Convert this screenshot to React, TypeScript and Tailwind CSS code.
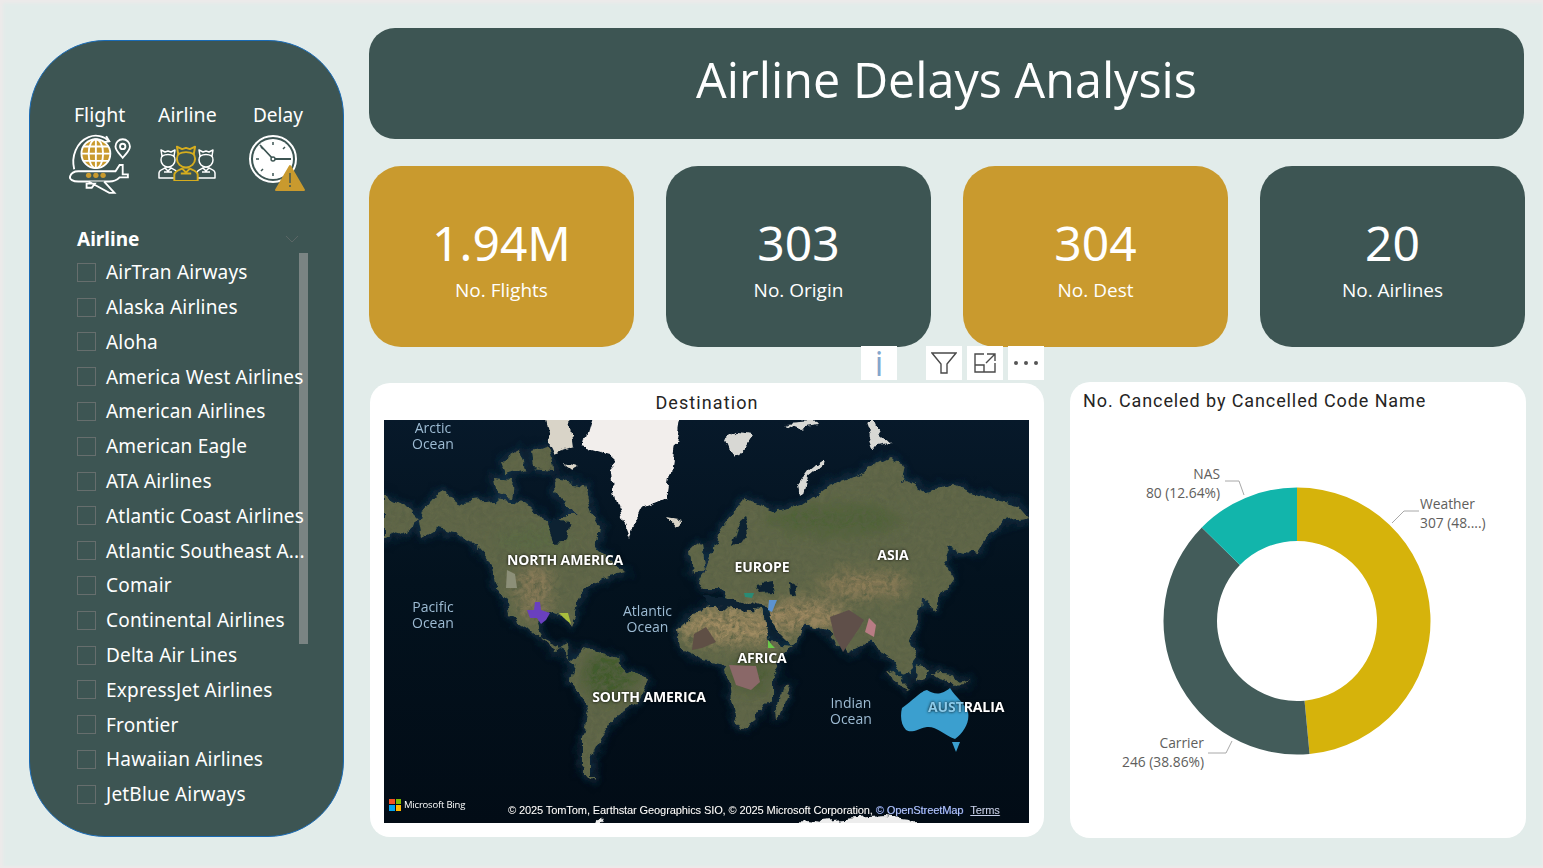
import React from "react";

const comic = "font-['Comic_Sans_MS','Noto_Sans',sans-serif]";
const segoe = "font-['Open_Sans',sans-serif]";
const din = "font-['Roboto',sans-serif]";

const airlines = [
  "AirTran Airways",
  "Alaska Airlines",
  "Aloha",
  "America West Airlines",
  "American Airlines",
  "American Eagle",
  "ATA Airlines",
  "Atlantic Coast Airlines",
  "Atlantic Southeast A...",
  "Comair",
  "Continental Airlines",
  "Delta Air Lines",
  "ExpressJet Airlines",
  "Frontier",
  "Hawaiian Airlines",
  "JetBlue Airways",
];

const kpis = [
  { value: "1.94M", label: "No. Flights", gold: true },
  { value: "303", label: "No. Origin", gold: false },
  { value: "304", label: "No. Dest", gold: true },
  { value: "20", label: "No. Airlines", gold: false },
];

const FlightIcon = () => (
  <svg width="64" height="64" viewBox="0 0 62 62" fill="none" stroke="#fff" strokeWidth="1.8">
    <path d="M6 36C3 24 8 10 20 5c7-3 15-1 20 4" />
    <path d="M37 4l3 5-6 1" />
    <circle cx="27" cy="21" r="14" fill="#C99A2E" />
    <path d="M13 21h28M15 14h24M15 28h24M27 7v28" />
    <ellipse cx="27" cy="21" rx="7" ry="14" />
    <path d="M53 25c-3-4-7-7-7-11a7 7 0 0 1 14 0c0 4-4 7-7 11z" />
    <circle cx="53" cy="14" r="2.6" />
    <path d="M2 43c1-3 4-5 8-5h36l4-6h3v9h5v3h-8c-3 3-6 4-10 4H10c-5 0-9-2-8-5z" fill="#3D5553" />
    <path d="M20 48l20 11h5l-10-11M18 50h8l-3 4h-5z" fill="#3D5553" />
    <circle cx="20" cy="42" r="2.6" fill="#C99A2E" stroke="none" />
    <circle cx="27" cy="42" r="2.6" fill="#C99A2E" stroke="none" />
    <circle cx="34" cy="42" r="2.6" fill="#C99A2E" stroke="none" />
  </svg>
);

const Crew = ({ color }: { color: string }) => (
  <g stroke={color} strokeWidth="1.5" fill="#3D5553" strokeLinejoin="round">
    <path d="M1 31v-5c0-3 4-4 6-5h6c2 1 6 2 6 5v5z" />
    <path d="M6 25h8M7 21l3 3 3-3" />
    <circle cx="10" cy="13" r="7" />
    <path d="M4 9L3 3l4 2 3-1 3 1 4-2-1 6c-4-2-8-2-12 0z" />
  </g>
);

const CrewIcon = () => (
  <svg width="58" height="38" viewBox="0 0 58 38" fill="none">
    <g transform="translate(0 4)">
      <Crew color="#fff" />
    </g>
    <g transform="translate(38 4)">
      <Crew color="#fff" />
    </g>
    <g transform="translate(15 0) scale(1.3 1.22)">
      <Crew color="#D6AD1E" />
    </g>
  </svg>
);

const DelayIcon = () => (
  <svg width="60" height="58" viewBox="0 0 60 58" fill="none">
    <circle cx="25" cy="24" r="23" stroke="#fff" strokeWidth="2" />
    <circle cx="25" cy="24" r="20" fill="#fff" />
    <g stroke="#3D5553" strokeWidth="1.5">
      <path d="M25 7v3M25 38v3M8 24h3M39 24h3M13 12l2 2M37 12l-2 2M13 36l2-2" />
      <path d="M25 24L12 10M25 24h18" strokeWidth="1.8" />
    </g>
    <circle cx="25" cy="24" r="2" fill="#fff" stroke="#3D5553" strokeWidth="1.4" />
    <path d="M42 31l14 24H28z" fill="#C99A2E" stroke="#C99A2E" strokeWidth="2" strokeLinejoin="round" />
    <path d="M42 38v10" stroke="#3D5553" strokeWidth="1.4" />
    <circle cx="42" cy="51" r="1" fill="#3D5553" />
  </svg>
);

const land = [
  "M39 92L54 73 79 83 109 80 136 83 156 92 163 108 183 95 209 95 216 108 213 128 229 142 243 152 216 158 199 172 191 192 186 203 178 195 163 192 153 205 158 222 172 232 184 226 185 238 196 240 190 245 181 232 160 222 143 206 125 195 123 182 111 162 109 142 96 128 76 115 53 110 39 118 36 102Z",
  "M198 228L223 233 244 250 263 260 253 283 232 297 219 317 209 337 209 360 198 347 198 317 206 287 185 260 190 243Z",
  "M307 190L340 186 377 190 383 217 395 227 410 228 400 233 387 260 387 277 371 300 358 310 350 297 345 263 341 243 320 240 299 230 295 213Z",
  "M316 168L333 118 360 78 394 92 418 85 445 65 465 58 505 38 519 45 516 58 543 72 570 65 604 78 634 85 645 98 620 102 607 112 593 135 566 128 560 142 570 158 549 188 536 178 533 202 526 220 533 237 518 257 511 240 493 230 488 220 463 233 442 210 421 203 417 213 408 227 395 215 384 188 346 182 336 168Z",
  "M0 75L20 85 35 100 18 112 0 120Z",
  "M109 58L130 60 128 78 112 75ZM118 40L135 30 140 50 124 55ZM148 30L165 25 170 50 150 48ZM170 60L200 65 212 105 195 95 175 80ZM306 130L318 125 322 150 308 155Z",
  "M400 287L406 270 403 262 393 285 394 300Z",
  "M547 253L570 255 583 263 565 264ZM505 250L520 262 527 270 510 262ZM532 245L545 248 540 260 530 256Z",
];

const MapPanel = () => (
  <svg viewBox="0 0 645 403" width="645" height="403" className="block" aria-hidden="true">
    <defs>
      <filter id="coast" filterUnits="userSpaceOnUse" x="0" y="0" width="645" height="403">
        <feTurbulence type="fractalNoise" baseFrequency="0.06" numOctaves="4" seed="7" result="t" />
        <feDisplacementMap in="SourceGraphic" in2="t" scale="13" xChannelSelector="R" yChannelSelector="G" />
      </filter>
      <filter id="terrain" filterUnits="userSpaceOnUse" x="0" y="0" width="645" height="403">
        <feTurbulence type="fractalNoise" baseFrequency="0.2" numOctaves="3" seed="4" />
        <feColorMatrix values="0 0 0 0 0.1  0 0 0 0 0.12  0 0 0 0 0.06  1.2 1.2 0 0 -0.85" />
        <feComposite in2="SourceAlpha" operator="in" result="n" />
        <feMerge>
          <feMergeNode in="SourceGraphic" />
          <feMergeNode in="n" />
        </feMerge>
      </filter>
      <filter id="glow">
        <feGaussianBlur stdDeviation="4" />
      </filter>
      <filter id="soft">
        <feGaussianBlur stdDeviation="0.6" />
      </filter>
      <filter id="sand">
        <feGaussianBlur stdDeviation="7" />
      </filter>
      <linearGradient id="ocean" x1="0" y1="0" x2="0" y2="1">
        <stop offset="0" stopColor="#07192A" />
        <stop offset="0.4" stopColor="#03121E" />
        <stop offset="1" stopColor="#020C16" />
      </linearGradient>
      <clipPath id="lands">
        {land.map((d) => (
          <path key={d} d={d} />
        ))}
      </clipPath>
    </defs>
    <rect width="645" height="403" fill="url(#ocean)" />
    <g filter="url(#coast)">
      <g filter="url(#glow)" fill="#123246" stroke="#123246" strokeWidth="4">
        {land.map((d) => (
          <path key={d} d={d} />
        ))}
      </g>
      <g filter="url(#terrain)">
        <g filter="url(#soft)" fill="#62684A">
          {land.map((d) => (
            <path key={d} d={d} />
          ))}
        </g>
        <g clipPath="url(#lands)" filter="url(#sand)">
          <ellipse cx="350" cy="205" rx="58" ry="20" fill="#A28D63" />
          <ellipse cx="420" cy="195" rx="45" ry="16" fill="#9C8760" />
          <ellipse cx="480" cy="165" rx="45" ry="14" fill="#8D7D58" />
          <ellipse cx="555" cy="285" rx="28" ry="16" fill="#A88A5F" />
          <ellipse cx="150" cy="170" rx="18" ry="26" fill="#8C7D5A" />
          <ellipse cx="225" cy="255" rx="26" ry="22" fill="#3F5A2C" />
          <ellipse cx="365" cy="255" rx="22" ry="16" fill="#4A5C30" />
          <ellipse cx="450" cy="100" rx="70" ry="16" fill="#4F6238" />
          <ellipse cx="150" cy="120" rx="40" ry="14" fill="#5B6A45" />
        </g>
      </g>
      {/* inland seas */}
      <g fill="#0A2233" filter="url(#soft)">
        <path d="M163 108L172 95 186 103 183 120 170 122Z" />
        <path d="M316 176L350 178 384 190 350 188 325 186Z" />
        <path d="M372 165L390 162 392 171 376 172Z" />
        <path d="M405 163L412 165 414 178 406 176Z" />
        <path d="M354 105L362 98 366 108 356 122 348 128Z" />
        <path d="M385 190L394 214 402 224 393 218Z" />
      </g>
      <path d="M209 -8L296 -8 289 38 283 78 259 88 246 118 238 98 229 62 226 35 199 27Z" fill="#F2EEEC" filter="url(#soft)" />
      <path d="M160 -8L185 -8 190 28 172 34 165 20ZM180 42L194 46 186 52ZM282 97L298 100 290 106Z" fill="#D9D4C8" filter="url(#soft)" />
      <path d="M341 20L352 12 370 14 362 24 352 38 345 30ZM400 3L430 1 434 6 415 9ZM482 5L490 1 497 18 505 25 490 28ZM441 37L425 50 414 65 416 75 420 72 424 58 440 44Z" fill="#D8D8D4" filter="url(#soft)" />
      <path d="M212 408L216 396 220 408ZM410 408L420 399 440 401 470 398 500 396 525 399 535 408Z" fill="#EDEDED" />
    </g>
    {/* highlighted regions */}
    <g filter="url(#soft)">
      <path d="M518 288C530 280 535 272 543 270C550 274 556 276 566 268C572 278 580 282 584 292C586 302 580 312 571 319C560 315 552 306 543 307C535 308 528 314 522 310C517 305 516 296 518 288Z" fill="#3A9FCF" />
      <path d="M568 322L576 322 572 332Z" fill="#3A9FCF" />
      <path d="M143 190L150 190 151 182 156 182 157 190 166 193 162 200 157 204 153 198 146 198Z" fill="#6A3FBF" />
      <path d="M175 193L184 193 187 204 182 200Z" fill="#A9BE3E" />
      <path d="M123 150L131 154 133 168 122 168Z" fill="#8C8F78" />
      <path d="M345 245L372 246 376 262 367 270 352 265Z" fill="#8A6767" />
      <path d="M310 214L322 207 332 222 318 228 308 230Z" fill="#5E4F45" />
      <path d="M446 197L465 190 480 200 474 210 459 232 450 215Z" fill="#5E4F4A" />
      <path d="M485 198L492 205 490 217 481 212Z" fill="#B87C84" />
      <path d="M360 173L370 173 368 178 361 177Z" fill="#2B8B74" />
      <path d="M385 180L393 180 388 192 384 190Z" fill="#5B93D2" />
      <path d="M384 220L388 225 391 228 384 228Z" fill="#6BCB4A" />
    </g>
  </svg>
);

const mapLabels = [
  { text: "NORTH AMERICA", x: 181, y: 132 },
  { text: "EUROPE", x: 378, y: 139 },
  { text: "ASIA", x: 509, y: 127 },
  { text: "AFRICA", x: 378, y: 230 },
  { text: "SOUTH AMERICA", x: 265, y: 269 },
];

const oceanLabels = [
  { text: ["Arctic", "Ocean"], x: 28, y: 0 },
  { text: ["Pacific", "Ocean"], x: 28, y: 179 },
  { text: ["Atlantic", "Ocean"], x: 239, y: 183 },
  { text: ["Indian", "Ocean"], x: 446, y: 275 },
];

const polar = (r: number, deg: number) => {
  const a = ((deg - 90) * Math.PI) / 180;
  return [134 + r * Math.cos(a), 134 + r * Math.sin(a)];
};

const arc = (from: number, to: number) => {
  const [x1, y1] = polar(133.5, from);
  const [x2, y2] = polar(133.5, to);
  const [x3, y3] = polar(80, to);
  const [x4, y4] = polar(80, from);
  const big = to - from > 180 ? 1 : 0;
  return `M${x1} ${y1}A133.5 133.5 0 ${big} 1 ${x2} ${y2}L${x3} ${y3}A80 80 0 ${big} 0 ${x4} ${y4}Z`;
};

const Donut = () => (
  <svg width="268" height="268" viewBox="0 0 268 268">
    <path d={arc(0, 174.6)} fill="#D6B30B" />
    <path d={arc(174.6, 314.5)} fill="#435C5A" />
    <path d={arc(314.5, 360)} fill="#12B5AB" />
  </svg>
);

const Callout = ({ d }: { d: string }) => (
  <svg width="30" height="24" viewBox="0 0 30 24" fill="none" stroke="#A8A8A8">
    <path d={d} />
  </svg>
);

export default function App() {
  return (
    <div className="relative flex h-[868px] w-[1543px] items-start gap-[25px] overflow-hidden bg-[#E2ECEA] pl-[29px] pr-[18px] pt-[28px] shadow-[inset_3px_3px_3px_#EDEAEA,inset_-1px_-2px_2px_#EDEAEA]">
      {/* slicer panel */}
      <aside className={`mt-[12px] h-[797px] w-[315px] shrink-0 overflow-hidden rounded-[76px] border-[1.5px] border-[#1A6BB5] bg-[#3D5553] pl-[46px] pt-[61px] text-white ${comic}`}>
        <div className="flex w-[240px] items-start">
          <div className="flex w-[84px] flex-col items-start">
            <span className="ml-[-2px] text-[19.5px] leading-[26px]">Flight</span>
            <div className="ml-[-8px] mt-[4px]">
              <FlightIcon />
            </div>
          </div>
          <div className="flex w-[95px] flex-col items-start">
            <span className="ml-[-2px] text-[19.5px] leading-[26px]">Airline</span>
            <div className="ml-[-2px] mt-[3px] pt-[12px]">
              <CrewIcon />
            </div>
          </div>
          <div className="flex flex-col items-start">
            <span className="ml-[-2px] text-[19px] leading-[26px]">Delay</span>
            <div className="ml-[-7px] mt-[7px]">
              <DelayIcon />
            </div>
          </div>
        </div>
        <div className="relative ml-[1px] mt-[30px] w-[232px]">
          <div className="flex h-[26px] items-center justify-between pr-[10px]">
            <span className="text-[19px] font-bold">Airline</span>
            <svg width="14" height="8" viewBox="0 0 14 8" fill="none" stroke="#5A6665">
              <path d="M1 1l6 6 6-6" />
            </svg>
          </div>
          <div className="absolute left-[222px] top-[27px] h-[391px] w-[9px] bg-[#7A8483]" />
          <ul className="relative mt-[3px] w-[232px] overflow-hidden">
            {airlines.map((name) => (
              <li key={name} className="flex h-[34.8px] items-center gap-[10px] whitespace-nowrap">
                <span className="h-[19px] w-[19px] shrink-0 border-[1.5px] border-[#666E6D]" />
                <span className="text-[19px] tracking-[0.2px]">{name}</span>
              </li>
            ))}
          </ul>
        </div>
      </aside>

      <main className="flex w-[1156px] shrink-0 flex-col">
        <header className={`mr-[1px] flex h-[111px] items-center justify-center rounded-[26px] bg-[#3D5553] pb-[8px] text-[48.5px] text-white ${segoe}`}>
          Airline Delays Analysis
        </header>

        <section className="mt-[27px] flex gap-[32px]">
          {kpis.map((kpi) => (
            <div
              key={kpi.label}
              className={`flex h-[181px] w-[265px] flex-col items-center justify-center rounded-[32px] pt-[5px] text-white ${kpi.gold ? "bg-[#C99A2E]" : "bg-[#3D5553]"}`}
            >
              <span className={`text-[48px] leading-[60px] ${comic}`}>{kpi.value}</span>
              <span className={`mt-[2px] text-[19px] leading-[30px] ${segoe}`}>{kpi.label}</span>
            </div>
          ))}
        </section>

        <section className="mt-[36px] flex items-start gap-[26px] pl-[1px]">
          <div className="relative h-[454px] w-[674px] shrink-0 rounded-[20px] bg-white px-[14px] pt-[8px]">
            {/* hover toolbar */}
            <div className="absolute left-[491px] top-[-37px] flex h-[34px] w-[183px] gap-[5px]">
              <div className={`mr-[24px] flex h-[34px] w-[36px] items-center justify-center bg-white text-[34px] leading-none text-[#84A6CC] ${segoe}`}>
                i
              </div>
              <div className="flex h-[34px] w-[36px] items-center justify-center bg-white">
                <svg width="26" height="24" viewBox="0 0 26 24" fill="none" stroke="#4A4A4A" strokeWidth="1.4">
                  <path d="M1 2h24l-9 11v9h-6v-9z" />
                </svg>
              </div>
              <div className="flex h-[34px] w-[36px] items-center justify-center bg-white">
                <svg width="22" height="20" viewBox="0 0 22 20" fill="none" stroke="#4A4A4A" strokeWidth="1.4">
                  <path d="M10 1H1v18h20v-9M1 12h9v7M13 1h8v7M21 1l-9 9" />
                </svg>
              </div>
              <div className="flex h-[34px] w-[36px] items-center justify-center gap-[6px] bg-white">
                <span className="h-[4px] w-[4px] rounded-full bg-[#555]" />
                <span className="h-[4px] w-[4px] rounded-full bg-[#555]" />
                <span className="h-[4px] w-[4px] rounded-full bg-[#555]" />
              </div>
            </div>

            <h2 className={`h-[29px] text-center text-[18px] leading-[24px] tracking-[1.1px] text-[#252423] ${din}`}>Destination</h2>
            <div className={`relative h-[403px] w-[645px] overflow-hidden ${segoe}`}>
              <MapPanel />
              {oceanLabels.map((o) => (
                <div key={o.text[0]} className="absolute text-[14px] leading-[16px] text-[#9DBBD3]" style={{ left: o.x, top: o.y }}>
                  {o.text.map((line) => (
                    <div key={line} className="text-center">
                      {line}
                    </div>
                  ))}
                </div>
              ))}
              {mapLabels.map((l) => (
                <span
                  key={l.text}
                  className="absolute -translate-x-1/2 whitespace-nowrap text-[14px] font-bold leading-[16px] tracking-[-0.1px] text-white [text-shadow:0_0_3px_#000]"
                  style={{ left: l.x, top: l.y }}
                >
                  {l.text}
                </span>
              ))}
              <span className="absolute left-[544px] top-[279px] whitespace-nowrap text-[14px] font-bold leading-[16px] tracking-[-0.1px] text-white [text-shadow:0_0_3px_#000]">
                <span className="text-[#8CCBEA]">AUST</span>RALIA
              </span>
              <div className="absolute bottom-[11px] left-[5px] flex items-center gap-[3px] text-[9.5px] tracking-[-0.2px] text-white">
                <span className="grid h-[12px] w-[12px] grid-cols-2 gap-px">
                  <span className="bg-[#F25022]" />
                  <span className="bg-[#7FBA00]" />
                  <span className="bg-[#00A4EF]" />
                  <span className="bg-[#FFB900]" />
                </span>
                Microsoft Bing
              </div>
              <div className="absolute bottom-[5px] left-[124px] flex gap-[7px] whitespace-nowrap font-['Liberation_Sans',sans-serif] text-[11px] tracking-[-0.09px] text-white [text-shadow:0.5px_0_0_#333]">
                <span>
                  © 2025 TomTom, Earthstar Geographics SIO, © 2025 Microsoft Corporation,{" "}
                  <span className="text-[#B9C8EE] [text-shadow:0.5px_0_0_#2A45A8]">© OpenStreetMap</span>
                </span>
                <span className="text-[#C5CFEA] underline">Terms</span>
              </div>
            </div>
          </div>

          <div className="relative mt-[-1px] h-[456px] w-[456px] shrink-0 rounded-[20px] bg-white pl-[13px] pt-[6px]">
            <h2 className={`text-[18px] leading-[26px] tracking-[0.9px] text-[#252423] ${din}`}>No. Canceled by Cancelled Code Name</h2>
            <div className="absolute left-[93px] top-[105px]">
              <Donut />
            </div>
            <div className={`absolute right-[306px] top-[82px] whitespace-nowrap text-right text-[13.8px] leading-[19px] text-[#605E5C] ${segoe}`}>
              <div>NAS</div>
              <div>80 (12.64%)</div>
            </div>
            <div className="absolute left-[154px] top-[93px]">
              <Callout d="M1 6h14l5 14" />
            </div>
            <div className={`absolute left-[350px] top-[112px] whitespace-nowrap text-[13.8px] leading-[19px] text-[#605E5C] ${segoe}`}>
              <div>Weather</div>
              <div>307 (48....)</div>
            </div>
            <div className="absolute left-[320px] top-[122px]">
              <Callout d="M2 19L14 7h15" />
            </div>
            <div className={`absolute right-[322px] top-[351px] whitespace-nowrap text-right text-[13.8px] leading-[19px] text-[#605E5C] ${segoe}`}>
              <div>Carrier</div>
              <div>246 (38.86%)</div>
            </div>
            <div className="absolute left-[136px] top-[352px]">
              <Callout d="M2 19h18l6-12" />
            </div>
          </div>
        </section>
      </main>
    </div>
  );
}
